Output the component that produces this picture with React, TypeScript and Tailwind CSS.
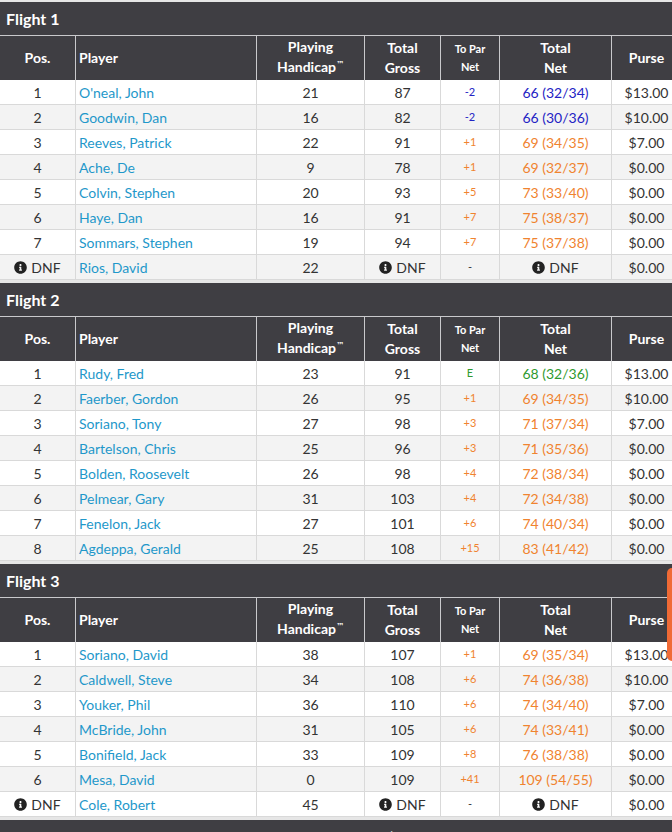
import React from "react";
import { FaInfoCircle } from "react-icons/fa";

type Row = {
  pos: string;
  name: string;
  hcp: string;
  gross: string;
  par: string;
  net: string;
  purse: string;
  color: "blue" | "orange" | "green" | "none";
};

const dnf = "DNF";

const flights: { title: string; rows: Row[] }[] = [
  {
    title: "Flight 1",
    rows: [
      { pos: "1", name: "O'neal, John", hcp: "21", gross: "87", par: "-2", net: "66 (32/34)", purse: "$13.00", color: "blue" },
      { pos: "2", name: "Goodwin, Dan", hcp: "16", gross: "82", par: "-2", net: "66 (30/36)", purse: "$10.00", color: "blue" },
      { pos: "3", name: "Reeves, Patrick", hcp: "22", gross: "91", par: "+1", net: "69 (34/35)", purse: "$7.00", color: "orange" },
      { pos: "4", name: "Ache, De", hcp: "9", gross: "78", par: "+1", net: "69 (32/37)", purse: "$0.00", color: "orange" },
      { pos: "5", name: "Colvin, Stephen", hcp: "20", gross: "93", par: "+5", net: "73 (33/40)", purse: "$0.00", color: "orange" },
      { pos: "6", name: "Haye, Dan", hcp: "16", gross: "91", par: "+7", net: "75 (38/37)", purse: "$0.00", color: "orange" },
      { pos: "7", name: "Sommars, Stephen", hcp: "19", gross: "94", par: "+7", net: "75 (37/38)", purse: "$0.00", color: "orange" },
      { pos: dnf, name: "Rios, David", hcp: "22", gross: dnf, par: "-", net: dnf, purse: "$0.00", color: "none" },
    ],
  },
  {
    title: "Flight 2",
    rows: [
      { pos: "1", name: "Rudy, Fred", hcp: "23", gross: "91", par: "E", net: "68 (32/36)", purse: "$13.00", color: "green" },
      { pos: "2", name: "Faerber, Gordon", hcp: "26", gross: "95", par: "+1", net: "69 (34/35)", purse: "$10.00", color: "orange" },
      { pos: "3", name: "Soriano, Tony", hcp: "27", gross: "98", par: "+3", net: "71 (37/34)", purse: "$7.00", color: "orange" },
      { pos: "4", name: "Bartelson, Chris", hcp: "25", gross: "96", par: "+3", net: "71 (35/36)", purse: "$0.00", color: "orange" },
      { pos: "5", name: "Bolden, Roosevelt", hcp: "26", gross: "98", par: "+4", net: "72 (38/34)", purse: "$0.00", color: "orange" },
      { pos: "6", name: "Pelmear, Gary", hcp: "31", gross: "103", par: "+4", net: "72 (34/38)", purse: "$0.00", color: "orange" },
      { pos: "7", name: "Fenelon, Jack", hcp: "27", gross: "101", par: "+6", net: "74 (40/34)", purse: "$0.00", color: "orange" },
      { pos: "8", name: "Agdeppa, Gerald", hcp: "25", gross: "108", par: "+15", net: "83 (41/42)", purse: "$0.00", color: "orange" },
    ],
  },
  {
    title: "Flight 3",
    rows: [
      { pos: "1", name: "Soriano, David", hcp: "38", gross: "107", par: "+1", net: "69 (35/34)", purse: "$13.00", color: "orange" },
      { pos: "2", name: "Caldwell, Steve", hcp: "34", gross: "108", par: "+6", net: "74 (36/38)", purse: "$10.00", color: "orange" },
      { pos: "3", name: "Youker, Phil", hcp: "36", gross: "110", par: "+6", net: "74 (34/40)", purse: "$7.00", color: "orange" },
      { pos: "4", name: "McBride, John", hcp: "31", gross: "105", par: "+6", net: "74 (33/41)", purse: "$0.00", color: "orange" },
      { pos: "5", name: "Bonifield, Jack", hcp: "33", gross: "109", par: "+8", net: "76 (38/38)", purse: "$0.00", color: "orange" },
      { pos: "6", name: "Mesa, David", hcp: "0", gross: "109", par: "+41", net: "109 (54/55)", purse: "$0.00", color: "orange" },
      { pos: dnf, name: "Cole, Robert", hcp: "45", gross: dnf, par: "-", net: dnf, purse: "$0.00", color: "none" },
    ],
  },
];

const colorClass: Record<Row["color"], string> = {
  blue: "text-[#2323c4]",
  orange: "text-[#f0832f]",
  green: "text-[#2f9a2f]",
  none: "text-[#333]",
};

const gridCols = "grid grid-cols-[76px_181px_108px_76px_59px_112px_70px]";

function Dnf() {
  return (
    <span className="inline-flex items-center gap-[4px]">
      <FaInfoCircle className="text-[#222] w-[13px] h-[13px]" />
      <span>DNF</span>
    </span>
  );
}

function Cell({ children, className = "" }: { children: React.ReactNode; className?: string }) {
  return (
    <div className={`flex items-center border-r border-[#d9d9d9] ${className}`}>{children}</div>
  );
}

function HeadCell({ children, className = "" }: { children: React.ReactNode; className?: string }) {
  return (
    <div className={`flex items-center border-r border-[#c9c9cc] text-white font-bold ${className}`}>
      {children}
    </div>
  );
}

function Flight({ title, rows }: { title: string; rows: Row[] }) {
  return (
    <div className="flex flex-col">
      <div className="h-[34px] bg-[#3f3e43] border-b border-[#c9c9cc] flex items-center pl-[6px] text-white font-bold text-[16px]">
        {title}
      </div>
      <div className={`${gridCols} h-[44px] bg-[#3f3e43] text-[14px] leading-[20px]`}>
        <HeadCell className="justify-center">Pos.</HeadCell>
        <HeadCell className="pl-[3px]">Player</HeadCell>
        <HeadCell className="justify-center text-center">
          <span>
            Playing
            <br />
            Handicap
            <span
              className="relative top-[-5px] text-[8px] font-bold"
              style={{ fontFamily: "'DejaVu Sans', sans-serif" }}
            >
              ™
            </span>
          </span>
        </HeadCell>
        <HeadCell className="justify-center text-center">
          <span>
            Total
            <br />
            Gross
          </span>
        </HeadCell>
        <HeadCell className="justify-center text-center text-[11px] leading-[18px]">
          <span>
            To Par
            <br />
            Net
          </span>
        </HeadCell>
        <HeadCell className="justify-center text-center">
          <span>
            Total
            <br />
            Net
          </span>
        </HeadCell>
        <HeadCell className="justify-center">Purse</HeadCell>
      </div>
      {rows.map((r, i) => (
        <div
          key={i}
          className={`${gridCols} h-[25px] border-b border-[#d9d9d9] text-[14px] text-[#333] ${
            i % 2 === 0 ? "bg-white" : "bg-[#f3f3f3]"
          }`}
        >
          <Cell className="justify-center">{r.pos === dnf ? <Dnf /> : r.pos}</Cell>
          <Cell className="pl-[3px] text-[#1f98ca]">{r.name}</Cell>
          <Cell className="justify-center">{r.hcp}</Cell>
          <Cell className="justify-center">{r.gross === dnf ? <Dnf /> : r.gross}</Cell>
          <Cell className={`justify-center text-[11px] ${colorClass[r.color]}`}>{r.par}</Cell>
          <Cell className={`justify-center ${colorClass[r.color]}`}>{r.net === dnf ? <Dnf /> : r.net}</Cell>
          <Cell className="justify-center">{r.purse}</Cell>
        </div>
      ))}
    </div>
  );
}

export default function App() {
  return (
    <div
      className="relative w-[672px] overflow-hidden bg-[#e6e6e6] pt-[2px]"
      style={{ fontFamily: "Lato, 'Open Sans', sans-serif" }}
    >
      <div className="w-[682px] flex flex-col gap-[3px]">
        {flights.map((f) => (
          <Flight key={f.title} title={f.title} rows={f.rows} />
        ))}
        <div className="bg-[#3f3e43] flex justify-center pt-[8px] pb-[10px] text-white font-bold text-[15px] leading-[20px] w-[672px]">
          Total Purse Allocated: $90.00
        </div>
      </div>
      <div className="absolute left-[667px] top-[568px] w-[10px] h-[93px] rounded-l-[5px] bg-[#f06a35]" />
    </div>
  );
}
